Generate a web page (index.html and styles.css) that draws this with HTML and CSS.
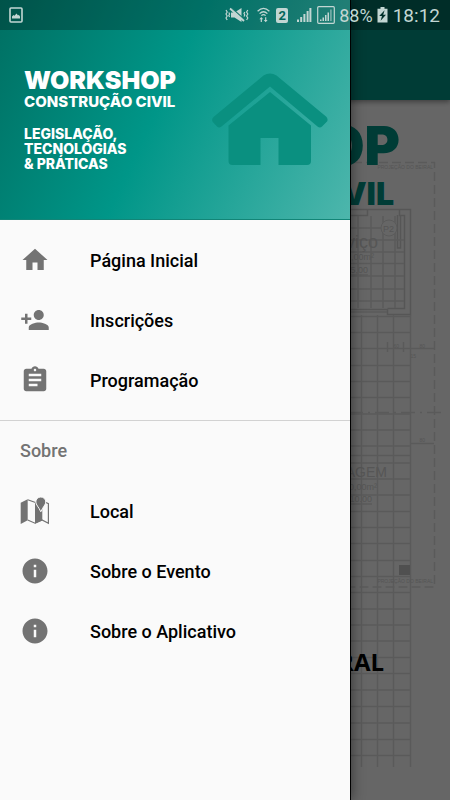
FILE: index.html
```html
<!DOCTYPE html>
<html lang="pt-BR">
<head>
<meta charset="utf-8">
<meta name="viewport" content="width=device-width, initial-scale=1">
<title>Workshop Construção Civil</title>
<link rel="stylesheet" href="styles.css">
</head>
<body>
<div class="screen">

  <main class="page">
    <div class="appbar"></div>
    <div class="poster">
      <svg class="plan" viewBox="340 100 110 700" aria-hidden="true">
        <g fill="none" stroke="#e2e2e2" stroke-width="1.5">
          <path stroke-dasharray="9 4" d="M340 162.500H434.500V587H340"/>
          <path stroke="#d6d6d6" d="M340 209.500H410.500V314.500H387.500V309.500H340M340 215.500H367.500V209.500M399.500 209.500V215.500H404.500V308.500H387.500M397.500 215V248H400.500V215"/>
          <path d="M358 216V308M371 216V308M383 216V308M395 216V308M340 228H397M340 240H404M340 252H404M340 263.500H404M340 276H404M340 289H404M340 301H404M340 312H387"/>
          <path d="M361.500 315V767M377.500 315V767M393.500 315V767M410.500 315V767"/>
          <path d="M340 316.500H410M340 332.500H410M340 348.500H434M340 365.500H410M340 381.500H410M340 397.500H410M340 414H410M340 430H410M340 446H410M340 455.500H410M340 463H410M340 479H410M340 495H410M340 511.500H410M340 527.500H410M340 543.500H410M340 560.500H410M340 576.500H410M340 592.500H410M340 609H410M340 625H410M340 641H410M340 657.500H410M340 673.500H410M340 690H410M340 706.500H410M340 723H410M340 739.500H410M340 755.500H410M410 443.500H434"/>
          <path stroke-dasharray="14 5 2 5" d="M349 412.500H444"/>
          <path d="M387.500 342V352M403.500 342V352"/>
          <circle cx="389" cy="228" r="8" fill="#fff" stroke-width="1"/>
          <path d="M350 275H368M350 504H372"/>
        </g>
        <path fill="#c8c8c8" d="M399 565h11v10h-11z"/>
        <g class="plan-text">
          <text x="433" y="169" font-size="5">PROJEÇÃO DO BEIRAL</text>
          <text x="433" y="583" font-size="5">PROJEÇÃO DO BEIRAL</text>
          <text x="394" y="232" font-size="9">P2</text>
          <text x="378" y="248" font-size="18">Serviço</text>
          <text x="374" y="260" font-size="9">2,00m²</text>
          <text x="368" y="273" font-size="9">15,00</text>
          <text x="387" y="477" font-size="14">GARAGEM</text>
          <text x="377" y="490" font-size="9">10,00m²</text>
          <text x="372" y="502" font-size="9">10.00</text>
          <text x="425" y="348" font-size="5">80</text>
          <text x="399" y="348" font-size="5">60</text>
          <text x="416" y="358" font-size="5">15</text>
          <text x="425" y="442" font-size="5">80</text>
        </g>
      </svg>
      <div class="poster-copy">
        <h1 class="poster-title">WORKSHOP</h1>
        <p class="poster-subtitle">CONSTRUÇÃO CIVIL</p>
        <p class="poster-note">GERAL</p>
      </div>
    </div>
  </main>

  <div class="scrim"></div>

  <aside class="drawer">
    <header class="drawer-header">
      <div class="brand">
        <p class="brand-title">WORKSHOP</p>
        <p class="brand-subtitle">CONSTRUÇÃO CIVIL</p>
        <p class="brand-topics">LEGISLAÇÃO,<br>TECNOLOGIAS<br>&amp; PRÁTICAS</p>
      </div>
      <svg class="house" viewBox="0 0 116 93" aria-hidden="true">
        <path d="M51.500 2.500Q58 -1.500 64.500 2.500L114 43.500Q116.500 46 115 48.500L110 53.500Q108 55.500 105.500 53.500L58 13.500L9.500 53.500Q7 55.500 5 53.500L.8 49Q-.8 46.500 1.500 44Z"/>
        <path d="M58 19L99 52.500V88Q99 92 95 92H66.500V65H48.500V92H20.500Q16.500 92 16.500 88V52.500Z"/>
      </svg>
    </header>
    <nav class="menu">
      <ul class="menu-group">
        <li><a class="menu-item" href="#inicio">
          <svg viewBox="0 0 24 24" aria-hidden="true"><path d="M10 20v-6h4v6h5v-8h3L12 3 2 12h3v8z"/></svg>
          <span>Página Inicial</span></a></li>
        <li><a class="menu-item" href="#inscricoes">
          <svg viewBox="0 0 24 24" aria-hidden="true"><path d="M15 12c2.210 0 4-1.790 4-4s-1.790-4-4-4-4 1.790-4 4 1.790 4 4 4zm-9-2V7H4v3H1v2h3v3h2v-3h3v-2H6zm9 4c-2.670 0-8 1.340-8 4v2h16v-2c0-2.660-5.330-4-8-4z"/></svg>
          <span>Inscrições</span></a></li>
        <li><a class="menu-item" href="#programacao">
          <svg viewBox="0 0 24 24" aria-hidden="true"><path d="M19 3h-4.180C14.400 1.840 13.300 1 12 1c-1.300 0-2.400.84-2.820 2H5c-1.100 0-2 .9-2 2v14c0 1.100.9 2 2 2h14c1.100 0 2-.9 2-2V5c0-1.100-.9-2-2-2zm-7 0c.55 0 1 .45 1 1s-.45 1-1 1-1-.45-1-1 .45-1 1-1zm2 14H7v-2h7v2zm3-4H7v-2h10v2zm0-4H7V7h10v2z"/></svg>
          <span>Programação</span></a></li>
      </ul>
      <h2 class="menu-heading">Sobre</h2>
      <ul class="menu-group menu-group-last">
        <li><a class="menu-item" href="#local">
          <svg viewBox="0 0 30 30" aria-hidden="true">
            <path d="M.7 6.800 7.700 3.200V24.200L.7 28Z"/>
            <path fill="none" stroke="#737373" stroke-width="1.200" d="M7.700 3.800 15.500 6.500M7.700 24 15 27.200 22 24 28.400 27.200V7.600L25.500 6.200"/>
            <path d="M15 6.600 18 5.200 22.300 13.500V24.400L15 27.800Z"/>
            <path stroke="#fafafa" d="M20.800 1a5 5 0 0 1 5 5c0 2.700-2.900 4.900-5 9.800-2.100-4.900-5-7.100-5-9.800a5 5 0 0 1 5-5z"/>
          </svg>
          <span>Local</span></a></li>
        <li><a class="menu-item" href="#evento">
          <svg viewBox="0 0 24 24" aria-hidden="true"><path d="M12 2C6.480 2 2 6.480 2 12s4.480 10 10 10 10-4.480 10-10S17.520 2 12 2zm1 15h-2v-6h2v6zm0-8h-2V7h2v2z"/></svg>
          <span>Sobre o Evento</span></a></li>
        <li><a class="menu-item" href="#aplicativo">
          <svg viewBox="0 0 24 24" aria-hidden="true"><path d="M12 2C6.480 2 2 6.480 2 12s4.480 10 10 10 10-4.480 10-10S17.520 2 12 2zm1 15h-2v-6h2v6zm0-8h-2V7h2v2z"/></svg>
          <span>Sobre o Aplicativo</span></a></li>
      </ul>
    </nav>
  </aside>

  <div class="statusbar">
    <svg class="status-photo" width="14" height="16" viewBox="0 0 14 16" aria-hidden="true">
      <rect x="1" y="1" width="12" height="14" rx="1" fill="none" stroke="currentColor" stroke-width="1.600"/>
      <path fill="currentColor" d="M3 11.500V9.500L4.500 8 5.500 8.800 7.500 6.500 9 8.500 9.800 7.800 11 9.500V11.500Z"/>
    </svg>
    <svg width="24" height="16" viewBox="0 0 24 16" aria-hidden="true">
      <path fill="currentColor" d="M6 5.500H9.500L16.500 1V15L9.500 10.500H6Z"/>
      <path stroke="#1b7a70" stroke-width="1.500" d="M6.500 1 20 13"/>
      <path fill="none" stroke="currentColor" stroke-width="1.800" d="M5 1.500 19 14"/>
      <path fill="none" stroke="currentColor" stroke-width="1.200" d="M1 3 2.200 5 1 7 2.200 9 1 11 2.200 13M3.800 5.500 4.600 7 3.800 8.500 4.600 10M22.800 3 21.600 5 22.800 7 21.600 9 22.800 11 21.600 13M19.800 5 19 6.500 19.800 8 19 9.500"/>
    </svg>
    <svg class="status-wifi" width="13" height="16" viewBox="0 0 13 16" aria-hidden="true">
      <g fill="none" stroke="currentColor" stroke-width="1.300"><path d="M.6 4.200Q6.500-1.400 12.400 4.200M2.600 6.600Q6.500 2.800 10.400 6.600"/><path d="M4.400 8.600Q6.500 6.600 8.600 8.600"/></g>
      <path fill="currentColor" d="M4.300 10 6.200 12.300H4.900V15H3.700V12.300H2.400ZM8.700 15.300 6.800 13H8.100V10.300H9.300V13H10.600Z"/>
    </svg>
    <span class="sim">2</span>
    <svg class="status-signal" width="16" height="16" viewBox="0 0 16 16" aria-hidden="true">
      <path fill="currentColor" d="M1 12.500h2V15H1zM4.200 10h2v5h-2zM7.400 7h2v8h-2zM10.600 4h2v11h-2zM13.400 1H15.400V15H13.400z"/>
    </svg>
    <svg width="18" height="18" viewBox="0 0 18 18" aria-hidden="true">
      <rect x=".7" y=".7" width="16.600" height="16.600" rx="1" fill="none" stroke="currentColor" stroke-width="1.200"/>
      <path fill="currentColor" d="M3 13.500h1.500V15H3zM5.500 11.500H7V15H5.500zM8 9h1.500v6H8zM10.500 6.500H12V15h-1.500z"/><path fill="currentColor" opacity=".5" d="M13 3.500h1.800V15H13z"/>
    </svg>
    <span class="battery-level">88%</span>
    <svg class="status-battery" width="11" height="16" viewBox="0 0 11 16" aria-hidden="true">
      <path fill="currentColor" d="M3.500 0h4v1.800H10.500V15.500H.5V1.800H3.500Z"/>
      <path fill="#00302b" d="M7.600 3.300 2.200 9H5L3.600 13.800 9 7.800H6.200Z"/>
    </svg>
    <span class="clock">18:12</span>
  </div>
</div>
</body>
</html>
```

FILE: styles.css
```css
* {
  box-sizing: border-box;
}

body,
h1,
h2,
p,
ul {
  margin: 0;
  padding: 0;
}

body {
  font-family: Roboto, "Liberation Sans", sans-serif;
  background: #fff;
}

/* The page, scrim, drawer and status bar are layers of one grid cell. */
.screen {
  display: grid;
  grid-template-columns: minmax(0, 1fr);
  min-height: 100vh;
}

.screen > * {
  grid-area: 1 / 1;
}

/* Page behind the drawer */
.page {
  display: flex;
  flex-direction: column;
  overflow: hidden;
}

.appbar {
  height: 100px;
  background: #009688;
  box-shadow: 0 2px 5px rgba(0, 0, 0, 0.4);
  z-index: 1;
}

.poster {
  display: grid;
}

.poster > * {
  grid-area: 1 / 1;
}

.plan {
  width: 110px;
  justify-self: end;
  overflow: visible;
}

.plan-text {
  fill: #d6d6d6;
  text-anchor: end;
  font-family: "Liberation Sans", sans-serif;
}

.poster-copy {
  padding: 16px 50px 0 0;
  text-align: right;
  font-family: Inter, "Liberation Sans", sans-serif;
  font-weight: 900;
  color: #009688;
}

.poster-title {
  font-size: 54px;
  line-height: 60px;
  font-weight: 900;
}

.poster-subtitle {
  padding-right: 6px;
  font-size: 32px;
  line-height: 36px;
  white-space: nowrap;
}

.poster-note {
  margin-top: 436px;
  padding-right: 16px;
  font-family: "Open Sans", "Noto Sans", sans-serif;
  font-size: 24px;
  line-height: 28px;
  font-weight: 700;
  color: #000;
}

.scrim {
  background: rgba(0, 0, 0, 0.6);
  z-index: 2;
}

/* Drawer */
.drawer {
  z-index: 3;
  margin-right: 100px;
  background: #fafafa;
  box-shadow: 1px 0 0 #000, 2px 0 12px rgba(0, 0, 0, 0.45);
}

.drawer-header {
  display: flex;
  justify-content: space-between;
  align-items: flex-start;
  height: 220px;
  padding: 66px 22px 0 24px;
  border-bottom: 1px solid #128577;
  background: linear-gradient(115deg, #006f62 0%, #009688 46%, #4db6ac 100%);
}

.brand {
  font-family: Inter, "Liberation Sans", sans-serif;
  font-weight: 800;
  color: #fff;
  white-space: nowrap;
}

.brand-title {
  font-size: 25px;
  line-height: 28px;
  font-weight: 900;
}

.brand-subtitle {
  font-size: 15px;
  line-height: 16px;
}

.brand-topics {
  margin-top: 16px;
  font-size: 14px;
  line-height: 15px;
}

.house {
  flex: none;
  width: 116px;
  margin-top: 7px;
  fill: #0a9080;
}

.menu-group {
  list-style: none;
  padding: 10px 0;
}

.menu-group-last {
  padding-top: 0;
}

.menu-item {
  display: flex;
  align-items: center;
  gap: 40px;
  height: 60px;
  padding: 0 20px;
  font-size: 18px;
  font-weight: 500;
  color: #000;
  text-decoration: none;
}

.menu-item svg {
  width: 30px;
  height: 30px;
  fill: #737373;
}

.menu-heading {
  padding: 0 20px;
  border-top: 1px solid #d2d2d2;
  font-size: 18px;
  line-height: 60px;
  font-weight: 500;
  color: #737373;
}

/* Status bar */
.statusbar {
  z-index: 4;
  align-self: start;
  display: flex;
  align-items: center;
  height: 30px;
  padding: 0 10px 0 9px;
  background: rgba(0, 0, 0, 0.25);
  color: #c2d6d3;
  font-size: 18px;
}

.status-photo {
  margin-right: auto;
}

.status-wifi {
  margin-left: 8px;
}

.sim {
  width: 12px;
  margin: 0 8px 0 6px;
  border-radius: 2px;
  background: currentColor;
  font-size: 13px;
  line-height: 15px;
  font-weight: 700;
  text-align: center;
}

.sim::first-letter {
  color: #04665b;
}

.status-signal {
  margin-right: 5px;
}

.battery-level {
  margin: 0 4px 0 4px;
}

.clock {
  margin-left: 5px;
  font-size: 19px;
}
```
